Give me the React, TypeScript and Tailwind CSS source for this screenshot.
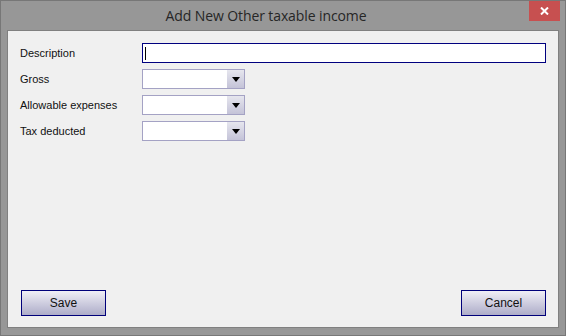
import React from "react";

function Dropdown() {
  return (
    <div className="flex h-[20px] w-[103px] border border-[#a4a2c4] bg-white">
      <div className="flex-1" />
      <div className="flex w-[17px] items-center justify-center bg-gradient-to-b from-[#e6e6ee] to-[#c4c3d8]">
        <svg width="8" height="5" viewBox="0 0 8 5">
          <path d="M0 0 H8 L4 5 Z" fill="#000" />
        </svg>
      </div>
    </div>
  );
}

function Row({ label, children }: { label: string; children: React.ReactNode }) {
  return (
    <div className="flex h-[20px] items-center">
      <div className="w-[122px] pt-[1px] text-[11px] text-[#111]">{label}</div>
      {children}
    </div>
  );
}

function Btn({ label }: { label: string }) {
  return (
    <button className="flex h-[26px] w-[85px] items-center justify-center border border-[#00007a] bg-gradient-to-b from-[#f0eff6] to-[#aeadc9] text-[12px] text-[#111]">
      {label}
    </button>
  );
}

export default function App() {
  return (
    <div
      className="flex h-[336px] w-[566px] flex-col border border-[#777777] bg-[#979797]"
      style={{ fontFamily: '"Liberation Sans", Arial, sans-serif' }}
    >
      <div className="flex h-[29px] items-start">
        <div className="flex h-[29px] flex-1 items-center justify-center pl-[2px] text-[14px] text-[#262626]" style={{ fontFamily: '"Open Sans", "Liberation Sans", sans-serif', letterSpacing: "-0.1px" }}>
          Add New Other taxable income
        </div>
        <div className="mr-[5px] flex h-[20px] w-[31px] items-center justify-center bg-[#c75050]">
          <svg width="9" height="8" viewBox="0 0 9 8">
            <path d="M1 0.5 L8 7.5 M8 0.5 L1 7.5" stroke="#fff" strokeWidth="2" />
          </svg>
        </div>
      </div>
      <div className="mx-[6px] mb-[7px] flex flex-1 flex-col border border-[#808080] bg-[#f0f0f0] pb-[11px] pl-[12px] pr-[12px] pt-[12px]">
        <div className="flex flex-col gap-[6px]">
          <Row label="Description">
            <div className="flex h-[20px] flex-1 items-center border border-[#00007f] bg-white pl-[2px]">
              <div className="h-[13px] w-[1px] bg-black" />
            </div>
          </Row>
          <Row label="Gross">
            <Dropdown />
          </Row>
          <Row label="Allowable expenses">
            <Dropdown />
          </Row>
          <Row label="Tax deducted">
            <Dropdown />
          </Row>
        </div>
        <div className="flex-1" />
        <div className="flex justify-between pl-[1px]">
          <Btn label="Save" />
          <Btn label="Cancel" />
        </div>
      </div>
    </div>
  );
}
